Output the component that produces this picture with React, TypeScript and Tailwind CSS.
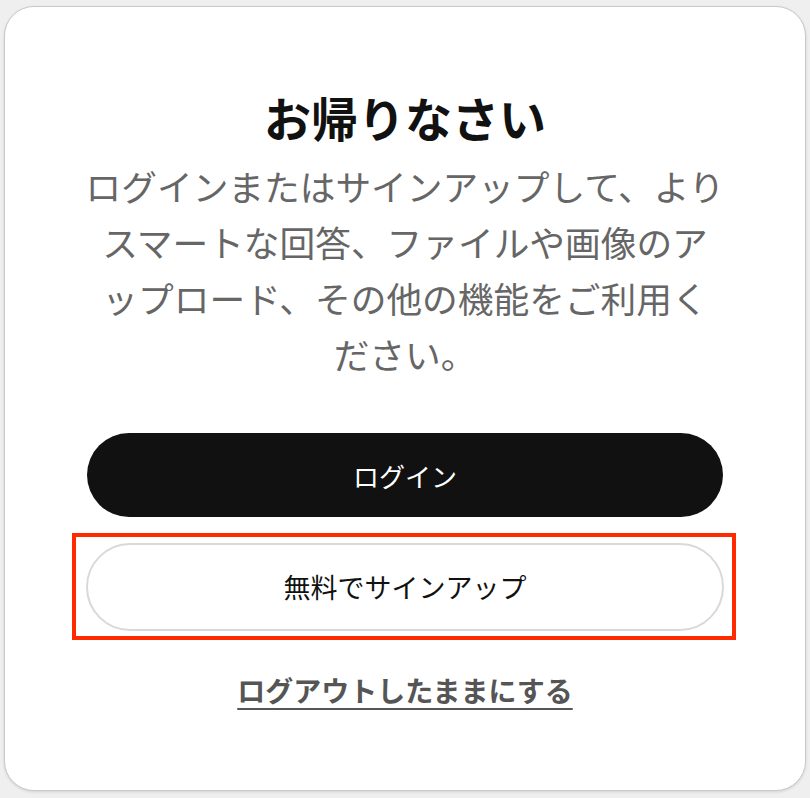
import React from "react";

export default function App() {
  const lines = [
    "ログインまたはサインアップして、より",
    "スマートな回答、ファイルや画像のア",
    "ップロード、その他の機能をご利用く",
    "ださい。",
  ];
  return (
    <div
      className="w-[810px] h-[798px] bg-[#efefef] pt-[6px] pl-[4px]"
      style={{ fontFamily: '"Noto Sans CJK JP", "Noto Sans", sans-serif' }}
    >
      <div className="w-[802px] h-[785px] bg-white rounded-[30px] border border-[#c9c9c9] shadow-[0_1px_3px_rgba(0,0,0,0.12)] flex flex-col items-center pt-[82px]">
        <h1 className="h-[56px] leading-[56px] text-[47px] font-bold text-[#111111] tracking-normal">
          お帰りなさい
        </h1>
        <div className="mt-[13px] flex flex-col items-center text-[35.7px] text-[#666666]">
          {lines.map((l) => (
            <div key={l} className="h-[56px] leading-[56px] whitespace-nowrap">
              {l}
            </div>
          ))}
        </div>
        <button className="mt-[51px] w-[636px] h-[84px] rounded-full bg-[#111111] text-white text-[26px] flex items-center justify-center">
          ログイン
        </button>
        <div className="mt-[26px] relative">
          <button className="w-[638px] h-[88px] rounded-full bg-white border-2 border-[#d9d9d9] text-[#111111] text-[27px] flex items-center justify-center">
            無料でサインアップ
          </button>
          <span className="absolute -left-[14px] -top-[10px] -right-[12px] -bottom-[9px] border-[4px] border-[#ff2a00] pointer-events-none" />
        </div>
        <a className="mt-[39px] h-[40px] leading-[40px] text-[28px] font-bold text-[#555555] underline decoration-2 underline-offset-[6px]">
          ログアウトしたままにする
        </a>
      </div>
    </div>
  );
}
